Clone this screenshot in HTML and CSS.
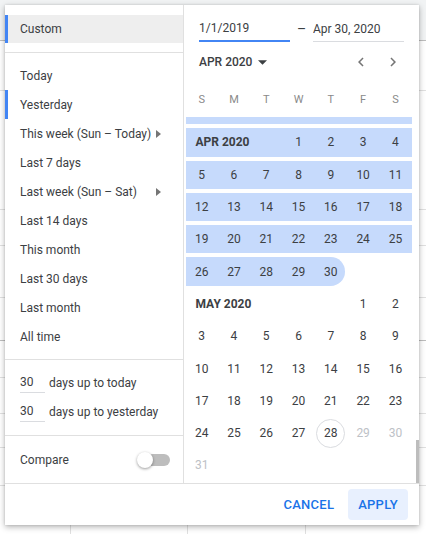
FILE: index.html
```html
<!DOCTYPE html>
<html lang="en">

<head>
  <meta charset="UTF-8">
  <meta name="viewport" content="width=device-width, initial-scale=1.0">
  <title>Date Range</title>
  <link rel="stylesheet" href="styles.css">
</head>

<body>
  <div class="picker">
    <div class="picker-body">
      <div class="presets">
        <div class="preset-group custom-group">
          <div class="preset custom">Custom</div>
        </div>
        <div class="preset-group">
          <div class="preset">Today</div>
          <div class="preset active">Yesterday</div>
          <div class="preset">This week (Sun – Today)
            <svg class="arrow" width="5" height="8" viewBox="0 0 5 8"><path d="M0 0L5 4L0 8Z"/></svg>
          </div>
          <div class="preset">Last 7 days</div>
          <div class="preset">Last week (Sun – Sat)
            <svg class="arrow" width="5" height="8" viewBox="0 0 5 8"><path d="M0 0L5 4L0 8Z"/></svg>
          </div>
          <div class="preset">Last 14 days</div>
          <div class="preset">This month</div>
          <div class="preset">Last 30 days</div>
          <div class="preset">Last month</div>
          <div class="preset">All time</div>
        </div>
        <div class="preset-group days-group">
          <div class="days-row">
            <input type="text" class="days-input" value="30">
            <span>days up to today</span>
          </div>
          <div class="days-row">
            <input type="text" class="days-input" value="30">
            <span>days up to yesterday</span>
          </div>
        </div>
        <div class="compare-row">
          <span>Compare</span>
          <div class="toggle">
            <span class="toggle-track"></span>
            <span class="toggle-thumb"></span>
          </div>
        </div>
      </div>

      <div class="calendar">
        <div class="date-inputs">
          <input type="text" class="date-input focused" value="1/1/2019">
          <span class="date-dash">–</span>
          <input type="text" class="date-input" value="Apr 30, 2020">
        </div>
        <div class="month-nav">
          <div class="month-title">
            APR 2020
            <svg width="9" height="5" viewBox="0 0 10 5"><path d="M0 0H10L5 5Z" fill="#3c4043"/></svg>
          </div>
          <div class="nav-btns">
            <span class="nav-btn">
              <svg width="18" height="18" viewBox="0 0 24 24"><path d="M15.41 7.41L14 6l-6 6 6 6 1.41-1.41L10.83 12z" fill="#757575"/></svg>
            </span>
            <span class="nav-btn">
              <svg width="18" height="18" viewBox="0 0 24 24"><path d="M8.59 16.59L10 18l6-6-6-6-1.41 1.41L13.17 12z" fill="#757575"/></svg>
            </span>
          </div>
        </div>
        <div class="weekdays">
          <span>S</span><span>M</span><span>T</span><span>W</span><span>T</span><span>F</span><span>S</span>
        </div>
        <div class="month-scroll">
          <div class="months">
            <!-- last week of March, scrolled mostly out of view -->
            <div class="week in-range"></div>
            <div class="week in-range">
              <span class="month-label">APR 2020</span><span>1</span><span>2</span><span>3</span><span>4</span>
            </div>
            <div class="week in-range">
              <span>5</span><span>6</span><span>7</span><span>8</span><span>9</span><span>10</span><span>11</span>
            </div>
            <div class="week in-range">
              <span>12</span><span>13</span><span>14</span><span>15</span><span>16</span><span>17</span><span>18</span>
            </div>
            <div class="week in-range">
              <span>19</span><span>20</span><span>21</span><span>22</span><span>23</span><span>24</span><span>25</span>
            </div>
            <div class="week in-range range-end">
              <span>26</span><span>27</span><span>28</span><span>29</span><span>30</span>
            </div>
            <div class="week">
              <span class="month-label">MAY 2020</span><span></span><span></span><span>1</span><span>2</span>
            </div>
            <div class="week">
              <span>3</span><span>4</span><span>5</span><span>6</span><span>7</span><span>8</span><span>9</span>
            </div>
            <div class="week">
              <span>10</span><span>11</span><span>12</span><span>13</span><span>14</span><span>15</span><span>16</span>
            </div>
            <div class="week">
              <span>17</span><span>18</span><span>19</span><span>20</span><span>21</span><span>22</span><span>23</span>
            </div>
            <div class="week">
              <span>24</span><span>25</span><span>26</span><span>27</span><span class="today">28</span><span class="muted">29</span><span class="muted">30</span>
            </div>
            <div class="week">
              <span class="muted">31</span>
            </div>
          </div>
          <div class="scroll-thumb"></div>
        </div>
      </div>
    </div>
    <div class="picker-footer">
      <button class="btn">Cancel</button>
      <button class="btn btn-apply">Apply</button>
    </div>
  </div>
</body>
</html>
```

FILE: styles.css
```css
* {
  box-sizing: border-box;
}

body {
  margin: 0;
  width: 426px;
  height: 534px;
  position: relative;
  overflow: hidden;
  font-family: Roboto, "Liberation Sans", sans-serif;
  font-size: 12px;
  color: #3c4043;
  background:
    linear-gradient(#bdbdbd, #bdbdbd) 0 40px / 100% 1px no-repeat,
    linear-gradient(#bdbdbd, #bdbdbd) 0 340px / 100% 1px no-repeat,
    linear-gradient(#e0e0e0, #e0e0e0) 0 90px / 100% 1px no-repeat,
    linear-gradient(#e0e0e0, #e0e0e0) 0 209px / 100% 1px no-repeat,
    linear-gradient(#e0e0e0, #e0e0e0) 0 245px / 100% 1px no-repeat,
    linear-gradient(#e0e0e0, #e0e0e0) 0 297px / 100% 1px no-repeat,
    linear-gradient(#e0e0e0, #e0e0e0) 0 377px / 100% 1px no-repeat,
    linear-gradient(#e0e0e0, #e0e0e0) 0 413px / 100% 1px no-repeat,
    linear-gradient(#e0e0e0, #e0e0e0) 0 447px / 100% 1px no-repeat,
    linear-gradient(#e0e0e0, #e0e0e0) 0 485px / 100% 1px no-repeat,
    linear-gradient(#e0e0e0, #e0e0e0) 70px 40px / 1px 100% no-repeat,
    linear-gradient(#e0e0e0, #e0e0e0) 187px 40px / 1px 100% no-repeat,
    linear-gradient(#e0e0e0, #e0e0e0) 305px 40px / 1px 100% no-repeat,
    linear-gradient(#f1f3f4, #f1f3f4) 0 0 / 100% 40px no-repeat,
    #fff;
}

.picker {
  position: absolute;
  left: 5px;
  top: 5px;
  width: 414px;
  height: 520px;
  background-color: #fff;
  box-shadow: 0 2px 6px rgba(0, 0, 0, 0.3), 0 0 2px rgba(0, 0, 0, 0.12);
  display: flex;
  flex-direction: column;
}

.picker-body {
  display: flex;
  height: 478px;
}

/* left column */
.presets {
  width: 179px;
  border-right: 1px solid #e0e0e0;
  display: flex;
  flex-direction: column;
}

.preset-group {
  padding: 8px 0;
  border-bottom: 1px solid #e0e0e0;
}

.custom-group {
  padding: 10px 0 9px;
}

.preset {
  height: 29px;
  display: flex;
  align-items: center;
  justify-content: space-between;
  padding: 0 22px 0 15px;
  white-space: nowrap;
}

.preset.custom {
  height: 28px;
  background-color: #eeeeee;
  border-left: 3px solid #4285f4;
  padding-left: 12px;
}

.preset.active {
  border-left: 3px solid #4285f4;
  padding-left: 12px;
}

.arrow {
  fill: #757575;
}

.days-group {
  padding: 8px 0 9px;
}

.days-row {
  height: 29px;
  display: flex;
  align-items: center;
  gap: 4px;
  padding-left: 15px;
}

.days-input {
  width: 25px;
  height: 20px;
  padding: 0;
  border: none;
  border-bottom: 1px solid #dadce0;
  background: none;
  font: inherit;
  color: inherit;
  outline: none;
}

.compare-row {
  flex: 1;
  display: flex;
  align-items: center;
  justify-content: space-between;
  padding: 0 13px 0 15px;
}

.toggle {
  position: relative;
  width: 33px;
  height: 16px;
}

.toggle-track {
  position: absolute;
  left: 4px;
  right: 0;
  top: 2px;
  height: 12px;
  border-radius: 6px;
  background-color: #bdbdbd;
}

.toggle-thumb {
  position: absolute;
  left: 0;
  top: 0;
  width: 16px;
  height: 16px;
  border-radius: 50%;
  background-color: #fff;
  box-shadow: 0 1px 3px rgba(0, 0, 0, 0.4);
}

/* right column */
.calendar {
  width: 235px;
  display: flex;
  flex-direction: column;
}

.date-inputs {
  display: flex;
  padding: 11px 15px 0;
}

.date-input {
  width: 91px;
  height: 26px;
  padding: 0;
  border: none;
  border-bottom: 1px solid #dadce0;
  background: none;
  font: inherit;
  color: inherit;
  outline: none;
}

.date-input.focused {
  border-bottom: 2px solid #4285f4;
}

.date-dash {
  width: 23px;
  text-align: center;
  line-height: 26px;
  font-size: 14px;
}

.month-nav {
  height: 40px;
  display: flex;
  align-items: center;
  padding: 0 10px 0 15px;
}

.month-title {
  display: flex;
  align-items: center;
  gap: 6px;
  font-weight: 500;
}

.nav-btns {
  margin-left: auto;
  display: flex;
}

.nav-btn {
  width: 32px;
  height: 32px;
  display: flex;
  align-items: center;
  justify-content: center;
}

.weekdays {
  height: 35px;
  display: grid;
  grid-template-columns: repeat(7, 32.3px);
  align-items: center;
  justify-items: center;
  padding-left: 1.5px;
  font-size: 11px;
  color: #8a8a8a;
}

.month-scroll {
  flex: 1;
  position: relative;
  overflow: hidden;
}

.months {
  display: flex;
  flex-direction: column;
  margin-top: -23px;
  padding-left: 1.5px;
}

.week {
  width: 226px;
  height: 28.3px;
  margin: 2px 0;
  display: grid;
  grid-template-columns: repeat(7, 32.3px);
  align-items: center;
  justify-items: center;
}

.week.in-range {
  background-color: #c6dafc;
}

.week.range-end {
  width: 159px;
  grid-template-columns: repeat(5, 32.3px);
  border-radius: 0 14.2px 14.2px 0;
}

.month-label {
  grid-column: span 3;
  justify-self: start;
  padding-left: 10px;
  font-weight: 700;
}

.today {
  width: 29px;
  height: 29px;
  border: 1px solid #dadce0;
  border-radius: 50%;
  display: flex;
  align-items: center;
  justify-content: center;
}

.muted {
  color: #bdc1c6;
}

.scroll-thumb {
  position: absolute;
  right: 0;
  top: 323px;
  width: 3px;
  height: 43px;
  background-color: #bdbdbd;
}

/* footer */
.picker-footer {
  height: 42px;
  border-top: 1px solid #e0e0e0;
  display: flex;
  align-items: center;
  justify-content: flex-end;
  gap: 6px;
  padding-right: 11px;
}

.btn {
  height: 31px;
  padding: 0 8px;
  border: none;
  border-radius: 4px;
  background: none;
  font-family: Roboto, "Liberation Sans", sans-serif;
  font-size: 13px;
  font-weight: 500;
  letter-spacing: 0.25px;
  text-transform: uppercase;
  color: #1a73e8;
  cursor: pointer;
}

.btn-apply {
  padding: 0 10px;
  background-color: #e8f0fe;
}
```
